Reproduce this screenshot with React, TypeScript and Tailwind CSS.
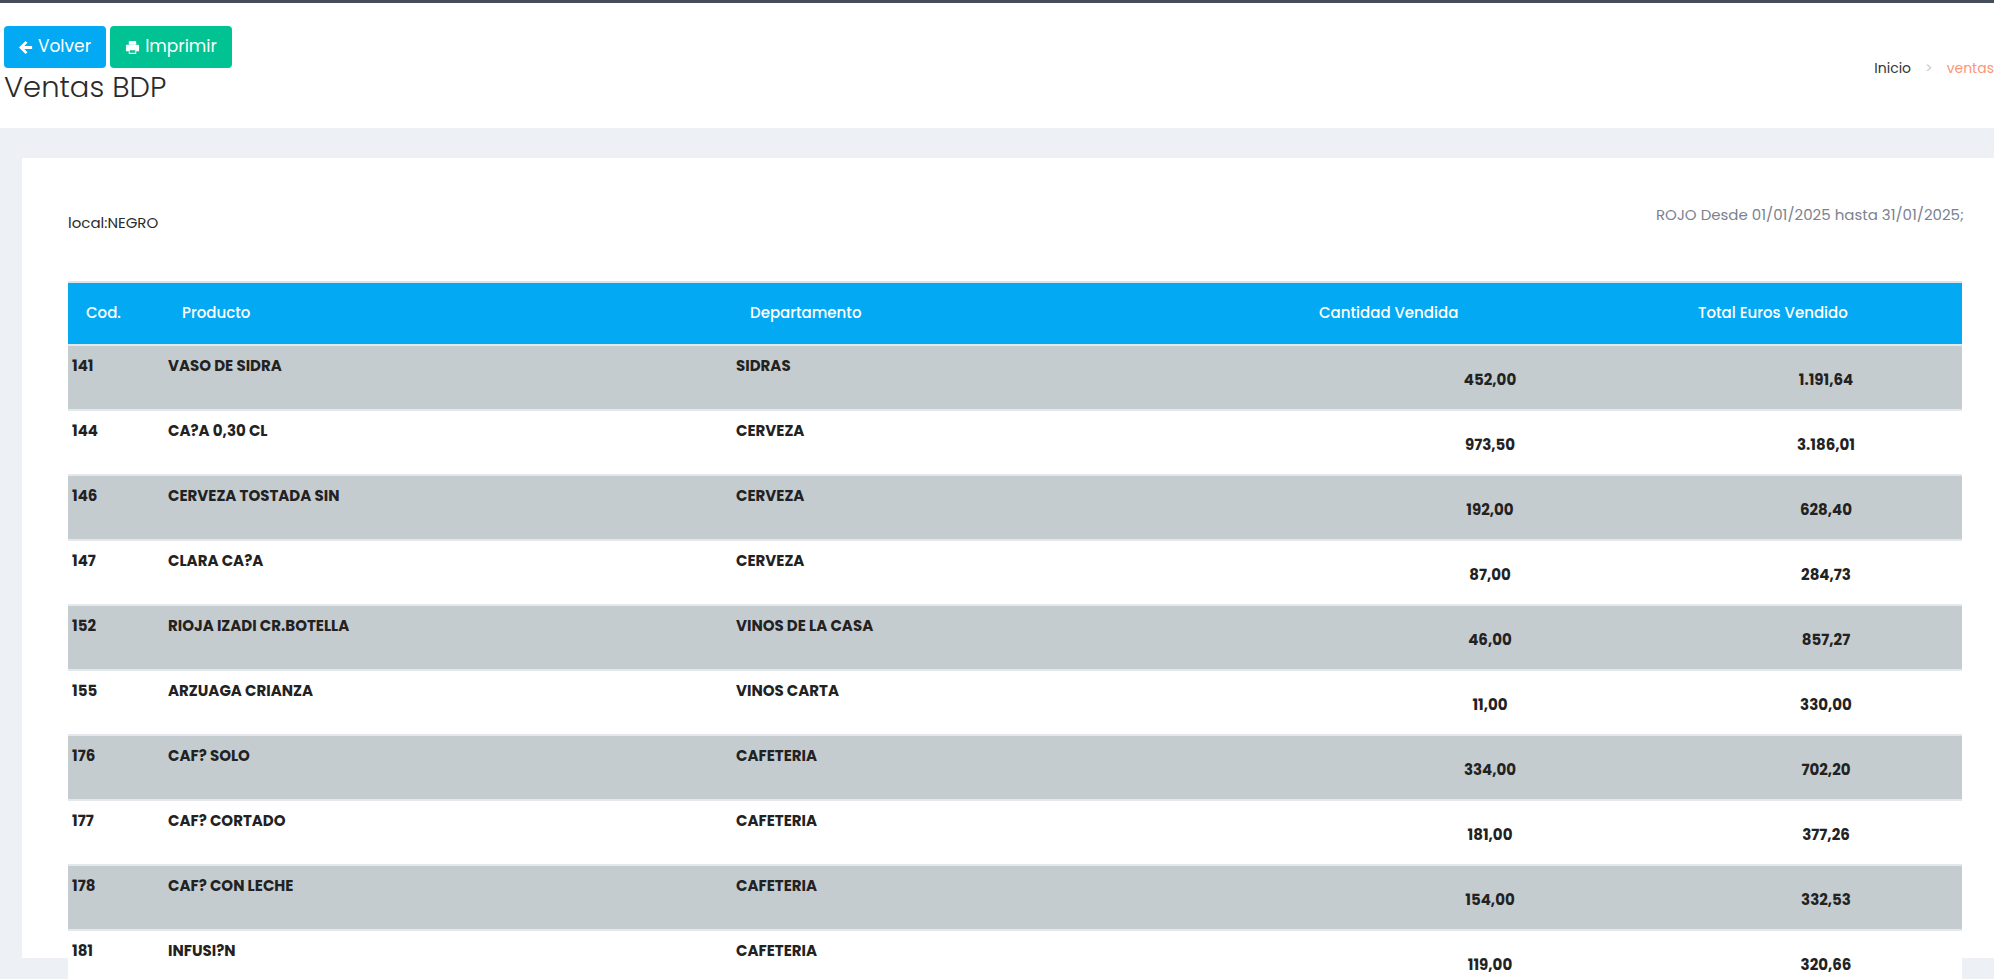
import React from "react";

const rows = [
  ["141", "VASO DE SIDRA", "SIDRAS", "452,00", "1.191,64"],
  ["144", "CA?A 0,30 CL", "CERVEZA", "973,50", "3.186,01"],
  ["146", "CERVEZA TOSTADA SIN", "CERVEZA", "192,00", "628,40"],
  ["147", "CLARA CA?A", "CERVEZA", "87,00", "284,73"],
  ["152", "RIOJA IZADI CR.BOTELLA", "VINOS DE LA CASA", "46,00", "857,27"],
  ["155", "ARZUAGA CRIANZA", "VINOS CARTA", "11,00", "330,00"],
  ["176", "CAF? SOLO", "CAFETERIA", "334,00", "702,20"],
  ["177", "CAF? CORTADO", "CAFETERIA", "181,00", "377,26"],
  ["178", "CAF? CON LECHE", "CAFETERIA", "154,00", "332,53"],
  ["181", "INFUSI?N", "CAFETERIA", "119,00", "320,66"],
];

export default function App() {
  return (
    <div className="w-[1994px] h-[979px] overflow-hidden bg-[#edf1f5] text-[#2b2b2b]" style={{ fontFamily: "Poppins, Lato, 'Open Sans', sans-serif" }}>
      <div className="h-[3px] bg-[#474c5b]" />
      <div className="bg-white h-[125px] flex justify-between">
        <div className="pl-[4px] pt-[23px]">
          <div className="flex gap-[4px]">
            <button className="h-[42px] w-[102px] rounded-[4px] bg-[#03a9f3] text-white text-[17px] flex items-center justify-center gap-[4px]">
              <svg width="15" height="15" viewBox="0 0 16 16"><path d="M8 2 2 8l6 6M2.5 8H14" stroke="white" strokeWidth="3" fill="none" /></svg>
              Volver
            </button>
            <button className="h-[42px] w-[122px] rounded-[4px] bg-[#00c292] text-white text-[17px] flex items-center justify-center gap-[5px]">
              <svg width="15" height="15" viewBox="0 0 16 16" fill="white"><rect x="4" y="1" width="8" height="4" rx="1"/><path d="M2 5h12a1 1 0 0 1 1 1v6h-3v3H4v-3H1V6a1 1 0 0 1 1-1Zm3 6v2.5h6V11Z" fillRule="evenodd"/></svg>
              Imprimir
            </button>
          </div>
          <div className="text-[29px] font-light leading-[34px] mt-[2px]">Ventas BDP</div>
        </div>
        <div className="pt-[55px] text-[14px] flex items-start gap-[14px] whitespace-nowrap">
          <span className="text-[#333]">Inicio</span>
          <span className="text-[#c5cad3]">&gt;</span>
          <span className="text-[#fb9678]">ventas</span>
        </div>
      </div>
      <div className="pt-[30px] pl-[22px]">
        <div className="bg-white h-[800px] pt-[46px] pl-[46px] pr-[26px]">
          <div className="flex justify-between text-[15px] pr-[4px]">
            <span className="mt-[8px] pl-[-1px]">local:NEGRO</span>
            <span className="text-[#7a8290]">ROJO Desde 01/01/2025 hasta 31/01/2025;</span>
          </div>
          <div className="mt-[46px] ml-[0px] w-[1894px]">
            <div className="grid grid-cols-[96px_568px_558px_400px_272px] h-[63px] bg-[#03a9f3] text-white text-[15px] font-medium items-center border-t-2 border-[#dde3ea]">
              <div className="pl-[18px]">Cod.</div>
              <div className="pl-[18px]">Producto</div>
              <div className="pl-[18px]">Departamento</div>
              <div className="pl-[29px]">Cantidad Vendida</div>
              <div className="pl-[8px]">Total Euros Vendido</div>
            </div>
            {rows.map((r, i) => (
              <div key={r[0]} className={`grid grid-cols-[96px_568px_558px_400px_272px] h-[65px] text-[15px] font-bold text-[#222] border-t-2 border-[#e4e7eb] ${i % 2 === 0 ? "bg-[#c5ccd0]" : "bg-white"}`}>
                <div className="pl-[4px] pt-[9px]">{r[0]}</div>
                <div className="pl-[4px] pt-[9px]">{r[1]}</div>
                <div className="pl-[4px] pt-[9px]">{r[2]}</div>
                <div className="text-center pt-[23px]">{r[3]}</div>
                <div className="text-center pt-[23px]">{r[4]}</div>
              </div>
            ))}
          </div>
        </div>
      </div>
    </div>
  );
}
